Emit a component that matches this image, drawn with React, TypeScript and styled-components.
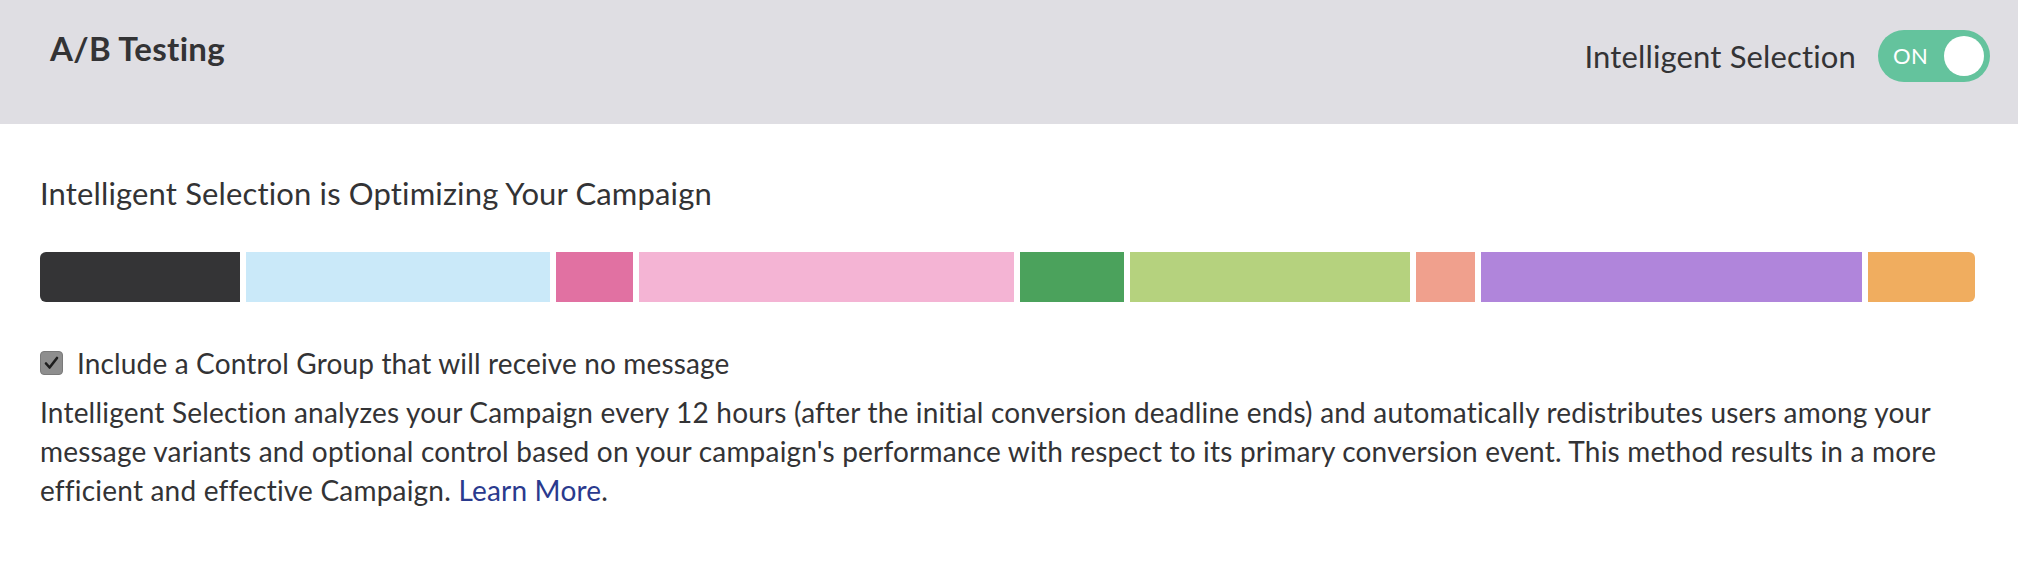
import React from "react";
import styled, { createGlobalStyle } from "styled-components";

const GlobalStyle = createGlobalStyle`
  html, body {
    margin: 0;
    padding: 0;
    background: #ffffff;
  }
  body {
    font-family: Lato, "Noto Sans", "Liberation Sans", sans-serif;
    color: #363638;
    -webkit-font-smoothing: antialiased;
  }
`;

const Page = styled.div`
  width: 2018px;
  min-height: 584px;
  background: #ffffff;
`;

const Header = styled.header`
  box-sizing: border-box;
  height: 124px;
  padding: 30px 28px 0 50px;
  background: #dfdee3;
  display: flex;
  justify-content: space-between;
  align-items: flex-start;
`;

const Title = styled.h1`
  margin: 0;
  font-size: 33px;
  line-height: 36px;
  font-weight: 700;
  color: #333335;
  letter-spacing: 0.3px;
`;

const HeaderRight = styled.div`
  display: flex;
  align-items: center;
  gap: 22px;
`;

const SwitchLabel = styled.span`
  font-size: 31px;
  line-height: 36px;
  font-weight: 400;
  color: #333335;
  letter-spacing: 0.15px;
`;

const Toggle = styled.button<{ $on: boolean }>`
  box-sizing: border-box;
  width: 112px;
  height: 52px;
  border: none;
  border-radius: 26px;
  padding: 0 6px 0 15px;
  background: ${(p) => (p.$on ? "#64c39d" : "#b9b9bf")};
  display: flex;
  align-items: center;
  justify-content: space-between;
  cursor: pointer;
  font-family: inherit;
`;

const ToggleText = styled.span`
  color: #ffffff;
  font-size: 22px;
  line-height: 24px;
  font-weight: 400;
  letter-spacing: 0.5px;
`;

const Knob = styled.span`
  width: 40px;
  height: 40px;
  border-radius: 50%;
  background: #ffffff;
`;

const Body = styled.section`
  padding: 52px 43px 0 40px;
`;

const Subtitle = styled.h2`
  margin: 0;
  font-size: 31px;
  line-height: 34px;
  font-weight: 400;
  color: #333335;
  letter-spacing: 0.15px;
`;

const Bar = styled.div`
  margin-top: 42px;
  height: 50px;
  display: flex;
  gap: 6px;
  border-radius: 6px;
  overflow: hidden;
`;

const Segment = styled.div<{ $color: string; $weight: number }>`
  flex: ${(p) => p.$weight} 1 0;
  background: ${(p) => p.$color};
`;

const CheckRow = styled.label`
  margin-top: 44px;
  display: flex;
  align-items: center;
  gap: 14px;
  cursor: pointer;
`;

const CheckBox = styled.span`
  box-sizing: border-box;
  width: 23px;
  height: 24px;
  border-radius: 4px;
  background: #8e8e8e;
  border: 1px solid #7a7a7a;
  display: flex;
  align-items: center;
  justify-content: center;
`;

const CheckLabel = styled.span`
  font-size: 28px;
  line-height: 34px;
  color: #333335;
  letter-spacing: 0.15px;
`;

const Description = styled.p`
  margin: 13px 0 0 0;
  font-size: 28px;
  line-height: 39px;
  color: #333335;
  letter-spacing: 0.2px;
`;

const LearnMore = styled.a`
  color: #2a3a8e;
  text-decoration: none;
`;

const segments = [
  { color: "#343436", weight: 200 },
  { color: "#cae9f9", weight: 304 },
  { color: "#e171a2", weight: 77 },
  { color: "#f4b4d4", weight: 374 },
  { color: "#4ba25c", weight: 104 },
  { color: "#b5d27e", weight: 280 },
  { color: "#f0a08d", weight: 59 },
  { color: "#b085db", weight: 381 },
  { color: "#f0ad5f", weight: 107 },
];

export default function App() {
  return (
    <Page>
      <GlobalStyle />
      <Header>
        <Title>A/B Testing</Title>
        <HeaderRight>
          <SwitchLabel>Intelligent Selection</SwitchLabel>
          <Toggle $on={true} type="button">
            <ToggleText>ON</ToggleText>
            <Knob />
          </Toggle>
        </HeaderRight>
      </Header>
      <Body>
        <Subtitle>Intelligent Selection is Optimizing Your Campaign</Subtitle>
        <Bar>
          {segments.map((s, i) => (
            <Segment key={i} $color={s.color} $weight={s.weight} />
          ))}
        </Bar>
        <CheckRow>
          <CheckBox>
            <svg width="15" height="14" viewBox="0 0 15 14">
              <path
                d="M2 7.5 L5.6 11.5 L13 2"
                fill="none"
                stroke="#1e1e1e"
                strokeWidth="2.6"
                strokeLinecap="round"
                strokeLinejoin="round"
              />
            </svg>
          </CheckBox>
          <CheckLabel>Include a Control Group that will receive no message</CheckLabel>
        </CheckRow>
        <Description>
          Intelligent Selection analyzes your Campaign every 12 hours (after the initial conversion
          deadline ends) and automatically redistributes users among your message variants and
          optional control based on your campaign's performance with respect to its primary
          conversion event. This method results in a more efficient and effective Campaign.{" "}
          <LearnMore href="#">Learn More</LearnMore>.
        </Description>
      </Body>
    </Page>
  );
}
